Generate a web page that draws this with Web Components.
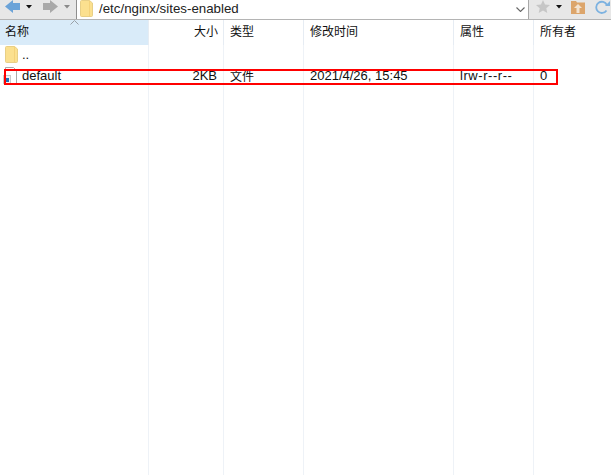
<!DOCTYPE html>
<html>
<head>
<meta charset="utf-8">
<style>
html, body { margin: 0; height: 100%; background: #fff; overflow: hidden; }
body { font-family: "Liberation Sans", "Noto Sans CJK SC", sans-serif; font-size: 13px; color: #111; }
</style>
</head>
<body>
<file-browser>
  <nav-bar slot="nav" path="/etc/nginx/sites-enabled"></nav-bar>
  <file-header slot="head"></file-header>
  <file-row slot="rows" name=".." kind="folder"></file-row>
  <file-row slot="rows" name="default" kind="link" size="2KB" type="文件" time="2021/4/26, 15:45" attr="lrw-r--r--" owner="0"></file-row>
</file-browser>
<script>
const COLS = '149px 75px 80px 150px 80px 1fr';

const FOLDER_SVG = `<svg width="13" height="17" viewBox="0 0 13 17">
  <path d="M.5 1.500C.5.900.9.500 1.500.500h8l3 2.500v12.500c0 .6-.4 1-1 1h-10c-.6 0-1-.4-1-1z" fill="#fbe08f" stroke="#e8cf86"/>
  <path d="M9.500.500v15.500" stroke="#f4d27a" fill="none"/>
</svg>`;

const LINK_SVG = `<svg width="16" height="17" viewBox="0 0 16 17">
  <path d="M2.500.500h8l3 3v13h-11z" fill="#fff" stroke="#a9a9a9"/>
  <rect x="0" y="8" width="8" height="9" fill="#c9c9c9"/>
  <rect x="1" y="9" width="6" height="7" fill="#f2f2f2"/>
  <rect x="3" y="11" width="3" height="4" fill="#1f6fb5"/>
</svg>`;

class NavBar extends HTMLElement {
  connectedCallback() {
    const root = this.attachShadow({ mode: 'open' });
    root.innerHTML = `
      <style>
        :host { display: flex; height: 20px; background: #e7e7e7; box-sizing: border-box; border-bottom: 1px solid #b4b4b4; overflow: hidden; }
        .btn { display: flex; align-items: flex-start; }
        .back { margin-left: 5px; }
        .fwd { margin-left: 11px; }
        .drop { margin: 5px 0 0 6px; }
        .addr { flex: 1; display: flex; align-items: flex-start; background: #fff; margin-left: 6px; border-left: 1px solid #8f8f8f; border-right: 1px solid #a8a8a8; padding-left: 3px; min-width: 0; }
        .path { margin-left: 6px; flex: 1; font-size: 13.300px; line-height: 17px; color: #222; }
        .chev { margin: 7px 3px 0 0; }
        .tools { display: flex; align-items: flex-start; width: 82px; box-sizing: border-box; padding-left: 7px; }
      </style>
      <div class="btn back">
        <svg width="15" height="13" viewBox="0 0 15 13"><path d="M0 6.500 8 0v3h7v7H8v3z" fill="#6ba3d8"/></svg>
        <svg class="drop" width="6" height="4" viewBox="0 0 6 4"><path d="M0 0h6L3 3.500z" fill="#111"/></svg>
      </div>
      <div class="btn fwd">
        <svg width="15" height="13" viewBox="0 0 15 13"><path d="M15 6.500 7 0v3H0v7h7v3z" fill="#a9a9a9"/></svg>
        <svg class="drop" width="6" height="4" viewBox="0 0 6 4"><path d="M0 0h6L3 3.500z" fill="#8a8a8a"/></svg>
      </div>
      <div class="addr">
        ${FOLDER_SVG}
        <span class="path">${this.getAttribute('path')}</span>
        <svg class="chev" width="9" height="5" viewBox="0 0 9 5"><path d="M.5.500l4 4 4-4" fill="none" stroke="#666" stroke-width="1.100"/></svg>
      </div>
      <div class="tools">
        <svg width="14" height="13" viewBox="0 0 14 13"><path d="m7 0 2 4.500 5 .5-3.700 3.200 1 4.800L7 10.500 2.700 13l1-4.800L0 5l5-.5z" fill="#c6c6c6"/></svg>
        <svg class="drop" width="6" height="4" viewBox="0 0 6 4"><path d="M0 0h6L3 3.500z" fill="#111"/></svg>
        <svg width="14" height="14" viewBox="0 0 14 14" style="margin-left:9px"><path d="M0 1h5l1 1.500h8V14H0z" fill="#dca56b"/><path d="M7 4l4 4H8.500v5h-3V8H3z" fill="#f3e3d0"/></svg>
        <svg width="15" height="14" viewBox="0 0 15 14" style="margin-left:10px"><path d="M11.500 10.500a5.600 5.600 0 1 1 .4-5.500" fill="none" stroke="#7db2e0" stroke-width="1.800"/><path d="M15 1v5h-5z" fill="#7db2e0"/></svg>
      </div>`;
  }
}

class FileHeader extends HTMLElement {
  connectedCallback() {
    const root = this.attachShadow({ mode: 'open' });
    root.innerHTML = `
      <style>
        :host { display: grid; grid-template-columns: ${COLS}; height: 25px; position: relative; font-size: 12px; }
        div { display: flex; align-items: center; padding: 0 0 4px 6px; box-sizing: border-box; border-right: 1px solid #e6ecf3; }
        div:last-of-type { border-right: 0; }
        .name { background: #d9ebf9; padding-left: 5px; }
        .num { justify-content: flex-end; padding-right: 5px; }
        .sort { position: absolute; left: 70px; top: 0; }
      </style>
      <div class="name">名称</div>
      <div class="num">大小</div>
      <div>类型</div>
      <div>修改时间</div>
      <div>属性</div>
      <div>所有者</div>
      <svg class="sort" width="9" height="5" viewBox="0 0 9 5"><path d="M.5 4.500 4.500.5l4 4" fill="none" stroke="#9aa0a6"/></svg>`;
  }
}

class FileRow extends HTMLElement {
  connectedCallback() {
    const a = n => this.getAttribute(n) || '';
    const isFolder = a('kind') === 'folder';
    const icon = isFolder ? FOLDER_SVG : LINK_SVG;
    const pad = isFolder ? 5 : 3;
    const root = this.attachShadow({ mode: 'open' });
    root.innerHTML = `
      <style>
        :host { display: grid; grid-template-columns: ${COLS}; height: 21px; }
        div { display: flex; align-items: center; padding: 0 0 2px 6px; box-sizing: border-box; white-space: nowrap; }
        .name { padding-left: ${pad}px; }
        .name span { margin-left: ${isFolder ? 4 : 3}px; }
        .num { justify-content: flex-end; padding-right: 7px; }
        .type { font-size: 12px; }
        .attr { letter-spacing: .55px; }
      </style>
      <div class="name">${icon}<span>${a('name')}</span></div>
      <div class="num">${a('size')}</div>
      <div class="type">${a('type')}</div>
      <div>${a('time')}</div>
      <div class="attr">${a('attr')}</div>
      <div>${a('owner')}</div>`;
  }
}

class FileBrowser extends HTMLElement {
  constructor() {
    super();
    this.attachShadow({ mode: 'open' }).innerHTML = `
      <style>
        :host { display: block; position: relative; width: 611px; height: 475px; overflow: hidden; }
        .lines { position: absolute; inset: 45px 0 0 0; display: grid; grid-template-columns: ${COLS}; }
        .lines i { border-right: 1px solid #eef2f7; }
        .lines i:last-child { border-right: 0; }
        .content { position: relative; }
        .mark { position: absolute; left: 4px; top: 69px; width: 554px; height: 16px; box-sizing: border-box; border: 2px solid #f00; }
      </style>
      <slot name="nav"></slot>
      <div class="lines"><i></i><i></i><i></i><i></i><i></i><i></i></div>
      <div class="content">
        <slot name="head"></slot>
        <slot name="rows"></slot>
      </div>
      <div class="mark"></div>`;
  }
}

customElements.define('nav-bar', NavBar);
customElements.define('file-header', FileHeader);
customElements.define('file-row', FileRow);
customElements.define('file-browser', FileBrowser);
</script>
</body>
</html>
